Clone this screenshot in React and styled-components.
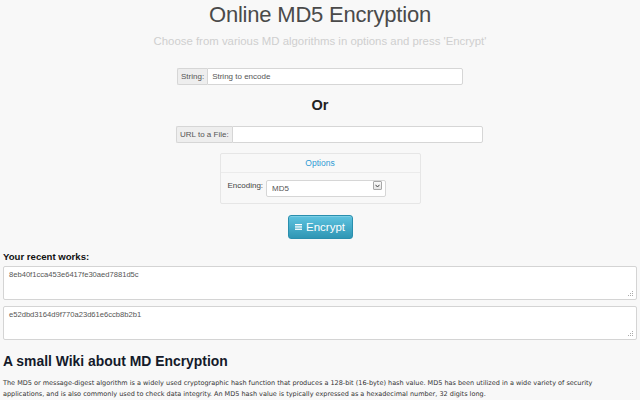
import React from "react";
import styled, { createGlobalStyle } from "styled-components";

const Global = createGlobalStyle`
  html, body { margin: 0; padding: 0; background: #f8f8f8; }
  body { font-family: "Liberation Sans", Arial, sans-serif; color: #333; }
  * { box-sizing: border-box; }
`;

const Page = styled.div`
  width: 640px;
  height: 400px;
  overflow: hidden;
  padding: 0 3px;
  display: flex;
  flex-direction: column;
`;

const Title = styled.h1`
  margin: 2px 0 0;
  height: 26px;
  line-height: 26px;
  text-align: center;
  font-family: "Liberation Sans", Arial, sans-serif;
  font-weight: 400;
  font-size: 22px;
  color: #4a4a4a;
  letter-spacing: -0.2px;
`;

const Subtitle = styled.p`
  margin: 5px 0 0;
  height: 16px;
  line-height: 16px;
  text-align: center;
  font-size: 11.4px;
  color: #cfcfcf;
`;

const FormColumn = styled.div`
  margin-left: 173px;
  display: flex;
  flex-direction: column;
`;

const InputGroup = styled.div`
  display: flex;
  width: ${(p) => p.$w}px;
  height: 17px;
  margin-top: ${(p) => p.$mt}px;
  margin-left: ${(p) => p.$ml || 0}px;
`;

const Addon = styled.span`
  display: flex;
  align-items: center;
  padding: 0 3px;
  background: #eeeeee;
  border: 1px solid #d6d6d6;
  border-right: none;
  border-radius: 2px 0 0 2px;
  font-size: 8px;
  color: #555;
  white-space: nowrap;
`;

const TextInput = styled.input`
  flex: 1;
  min-width: 0;
  height: 100%;
  border: 1px solid #d6d6d6;
  border-radius: 0 2px 2px 0;
  background: #fff;
  padding: 0 4px;
  font-family: "Liberation Sans", Arial, sans-serif;
  font-size: 8px;
  color: #555;
  outline: none;
  &::placeholder { color: #555; }
`;

const Or = styled.div`
  margin-top: 11px;
  height: 18px;
  line-height: 18px;
  text-align: center;
  font-weight: 700;
  font-size: 14.5px;
  color: #222;
`;

const Panel = styled.div`
  align-self: center;
  margin-top: 10px;
  width: 201px;
  border: 1px solid #e6e6e6;
  border-radius: 2px;
`;

const PanelHead = styled.div`
  height: 19px;
  line-height: 19px;
  text-align: center;
  font-size: 8.5px;
  color: #2d9ad4;
  border-bottom: 1px solid #ebebeb;
`;

const PanelBody = styled.div`
  display: flex;
  align-items: center;
  gap: 3px;
  padding: 4px 7px 9px;
`;

const Label = styled.label`
  font-size: 8px;
  color: #444;
`;

const SelectWrap = styled.div`
  position: relative;
  width: 120px;
  height: 17px;
`;

const Select = styled.select`
  appearance: none;
  width: 100%;
  height: 100%;
  border: 1px solid #d6d6d6;
  border-radius: 2px;
  background: #fff;
  padding: 0 5px;
  font-family: "Liberation Sans", Arial, sans-serif;
  font-size: 8px;
  color: #555;
  outline: none;
`;

const Arrow = styled.span`
  position: absolute;
  right: 4px;
  top: 4px;
  width: 9px;
  height: 9px;
  border: 1px solid #a8a8a8;
  border-radius: 1px;
  background: linear-gradient(#fafafa, #e4e4e4);
  display: flex;
  align-items: center;
  justify-content: center;
  pointer-events: none;
`;

const Button = styled.button`
  align-self: center;
  margin-top: 11px;
  width: 65px;
  height: 24px;
  border: 1px solid #2a8fae;
  border-radius: 3px;
  background: linear-gradient(#5ec3e0, #2f96b4);
  color: #fff;
  font-family: "Liberation Sans", Arial, sans-serif;
  font-size: 11.5px;
  display: flex;
  align-items: center;
  justify-content: center;
  gap: 4px;
  padding: 0;
  box-shadow: inset 0 1px 0 rgba(255,255,255,0.2);
`;

const SectionLabel = styled.div`
  margin-top: 12px;
  height: 11px;
  line-height: 11px;
  font-weight: 700;
  font-size: 9.6px;
  color: #111;
`;

const AreaWrap = styled.div`
  position: relative;
  margin-top: ${(p) => p.$mt}px;
  height: 35px;
`;

const Area = styled.textarea`
  display: block;
  width: 100%;
  height: 100%;
  resize: none;
  border: 1px solid #d4d4d4;
  border-radius: 2px;
  background: #fff;
  padding: 3px 5px;
  font-family: "Liberation Sans", Arial, sans-serif;
  font-size: 7.6px;
  line-height: 10px;
  color: #555;
  outline: none;
`;

const Grip = styled.svg`
  position: absolute;
  right: 3px;
  bottom: 3px;
`;

const WikiTitle = styled.h2`
  margin: 12px 0 0;
  height: 18px;
  line-height: 18px;
  font-weight: 700;
  font-size: 13.9px;
  color: #141a2a;
`;

const Paragraph = styled.p`
  margin: 8px 0 0;
  max-width: 612px;
  font-family: "DejaVu Sans", Verdana, sans-serif;
  font-size: 6.5px;
  line-height: 11px;
  color: #333;
`;

const ListIcon = () => (
  <svg width="7" height="6" viewBox="0 0 7 6">
    <rect x="0" y="0" width="7" height="1.3" fill="#fff" />
    <rect x="0" y="2.3" width="7" height="1.3" fill="#fff" />
    <rect x="0" y="4.6" width="7" height="1.3" fill="#fff" />
  </svg>
);

const GripIcon = () => (
  <Grip width="7" height="7" viewBox="0 0 7 7">
    {[[5, 1], [3, 3], [5, 3], [1, 5], [3, 5], [5, 5]].map(([x, y]) => (
      <rect key={`${x}-${y}`} x={x} y={y} width="1" height="1" fill="#aaa" />
    ))}
  </Grip>
);

export default function App() {
  return (
    <>
      <Global />
      <Page>
        <Title>Online MD5 Encryption</Title>
        <Subtitle>Choose from various MD algorithms in options and press 'Encrypt'</Subtitle>
        <FormColumn>
          <InputGroup $w={286} $mt={19} $ml={1}>
            <Addon>String:</Addon>
            <TextInput placeholder="String to encode" />
          </InputGroup>
        </FormColumn>
        <Or>Or</Or>
        <FormColumn>
          <InputGroup $w={307} $mt={12}>
            <Addon>URL to a File:</Addon>
            <TextInput />
          </InputGroup>
        </FormColumn>
        <Panel>
          <PanelHead>Options</PanelHead>
          <PanelBody>
            <Label>Encoding:</Label>
            <SelectWrap>
              <Select defaultValue="MD5">
                <option>MD5</option>
                <option>MD4</option>
                <option>MD2</option>
              </Select>
              <Arrow>
                <svg width="5" height="4" viewBox="0 0 5 4">
                  <path d="M0.5 0.8 L2.5 3 L4.5 0.8" stroke="#444" strokeWidth="1" fill="none" />
                </svg>
              </Arrow>
            </SelectWrap>
          </PanelBody>
        </Panel>
        <Button>
          <ListIcon />
          Encrypt
        </Button>
        <SectionLabel>Your recent works:</SectionLabel>
        <AreaWrap $mt={4}>
          <Area defaultValue="8eb40f1cca453e6417fe30aed7881d5c" />
          <GripIcon />
        </AreaWrap>
        <AreaWrap $mt={6}>
          <Area defaultValue="e52dbd3164d9f770a23d61e6ccb8b2b1" />
          <GripIcon />
        </AreaWrap>
        <WikiTitle>A small Wiki about MD Encryption</WikiTitle>
        <Paragraph>
          The MD5 or message-digest algorithm is a widely used cryptographic hash function that produces a 128-bit (16-byte) hash value. MD5 has been utilized in a wide variety of security applications, and is also commonly used to check data integrity. An MD5 hash value is typically expressed as a hexadecimal number, 32 digits long.
        </Paragraph>
      </Page>
    </>
  );
}
